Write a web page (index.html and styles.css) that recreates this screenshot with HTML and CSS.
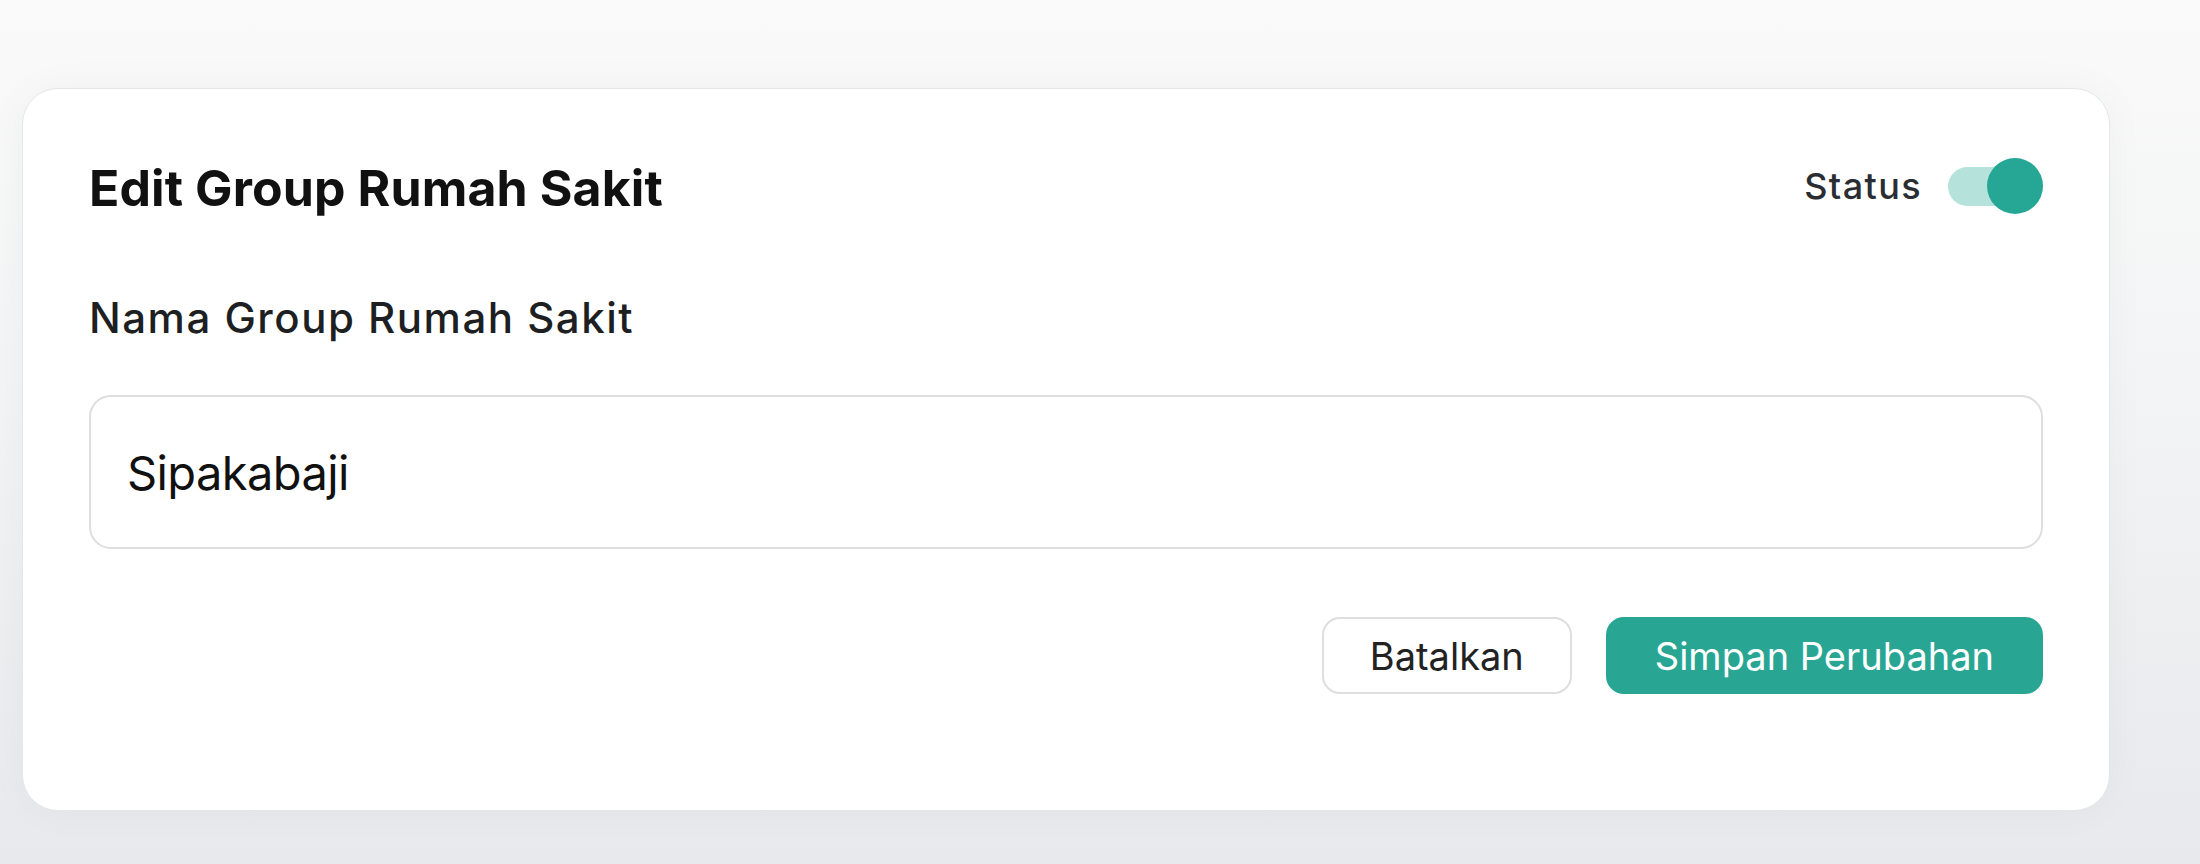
FILE: index.html
```html
<!DOCTYPE html>
<html lang="id">
<head>
  <meta charset="UTF-8">
  <meta name="viewport" content="width=device-width, initial-scale=1.0">
  <title>Edit Group Rumah Sakit</title>
  <link rel="stylesheet" href="styles.css">
</head>
<body>
  <div class="modal">
    <div class="modal-header">
      <h1>Edit Group Rumah Sakit</h1>
      <div class="status">
        <span class="status-label">Status</span>
        <div class="toggle">
          <span class="toggle-track"></span>
          <span class="toggle-knob"></span>
        </div>
      </div>
    </div>

    <form class="group-form">
      <label for="groupName">Nama Group Rumah Sakit</label>
      <input type="text" id="groupName" value="Sipakabaji" />
      <div class="actions">
        <button type="button" class="btn btn-cancel">Batalkan</button>
        <button type="button" class="btn btn-save">Simpan Perubahan</button>
      </div>
    </form>
  </div>
</body>
</html>
```

FILE: styles.css
```css
body {
  font-family: Inter, "Liberation Sans", sans-serif;
  background: linear-gradient(180deg, #fafafa 0%, #f3f4f5 45%, #e7e9ec 100%);
  margin: 0;
  padding: 88px 90px 0 22px;
  min-height: 100vh;
  box-sizing: border-box;
}

.modal {
  background: #fff;
  border: 1px solid #e4e7ea;
  border-radius: 36px;
  box-shadow: 0 0 40px rgba(0, 0, 0, 0.04);
  padding: 69px 66px 116px 66px;
}

.modal-header {
  display: flex;
  justify-content: space-between;
  align-items: center;
  height: 56px;
}

h1 {
  margin: 0;
  font-size: 50px;
  font-weight: 700;
  color: #111;
  line-height: 56px;
  letter-spacing: 0.1px;
  padding-top: 3px;
}

.status {
  display: flex;
  align-items: center;
  gap: 26px;
}

.status-label {
  font-size: 36px;
  font-weight: 500;
  color: #2a2e33;
  letter-spacing: 1.4px;
}

.toggle {
  position: relative;
  width: 95px;
  height: 56px;
}

.toggle-track {
  position: absolute;
  left: 0;
  top: 9px;
  width: 86px;
  height: 39px;
  border-radius: 20px;
  background-color: #b6e2dc;
}

.toggle-knob {
  position: absolute;
  right: 0;
  top: 0;
  width: 56px;
  height: 56px;
  border-radius: 50%;
  background-color: #26a694;
}

.group-form {
  display: flex;
  flex-direction: column;
}

label {
  margin-top: 79px;
  font-size: 42px;
  font-weight: 500;
  line-height: 50px;
  color: #1e1f22;
  letter-spacing: 1.5px;
}

input {
  margin-top: 52px;
  height: 154px;
  padding: 0 36px;
  border: 2px solid #dedede;
  border-radius: 22px;
  font-family: Inter, "Liberation Sans", sans-serif;
  font-size: 47px;
  letter-spacing: -0.6px;
  color: #111;
  box-sizing: border-box;
  outline: none;
}

.actions {
  margin-top: 68px;
  display: flex;
  justify-content: flex-end;
  gap: 34px;
}

.btn {
  height: 77px;
  padding: 0 46px;
  border-radius: 18px;
  font-family: Inter, "Liberation Sans", sans-serif;
  font-size: 38px;
  cursor: pointer;
  box-sizing: border-box;
}

.btn-cancel {
  background: #fff;
  color: #222;
  border: 2px solid #dedede;
}

.btn-save {
  padding: 0 47px;
  background-color: #28a693;
  color: #fff;
  border: 2px solid #28a693;
}

.btn-save:hover {
  background-color: #21907f;
}
```
